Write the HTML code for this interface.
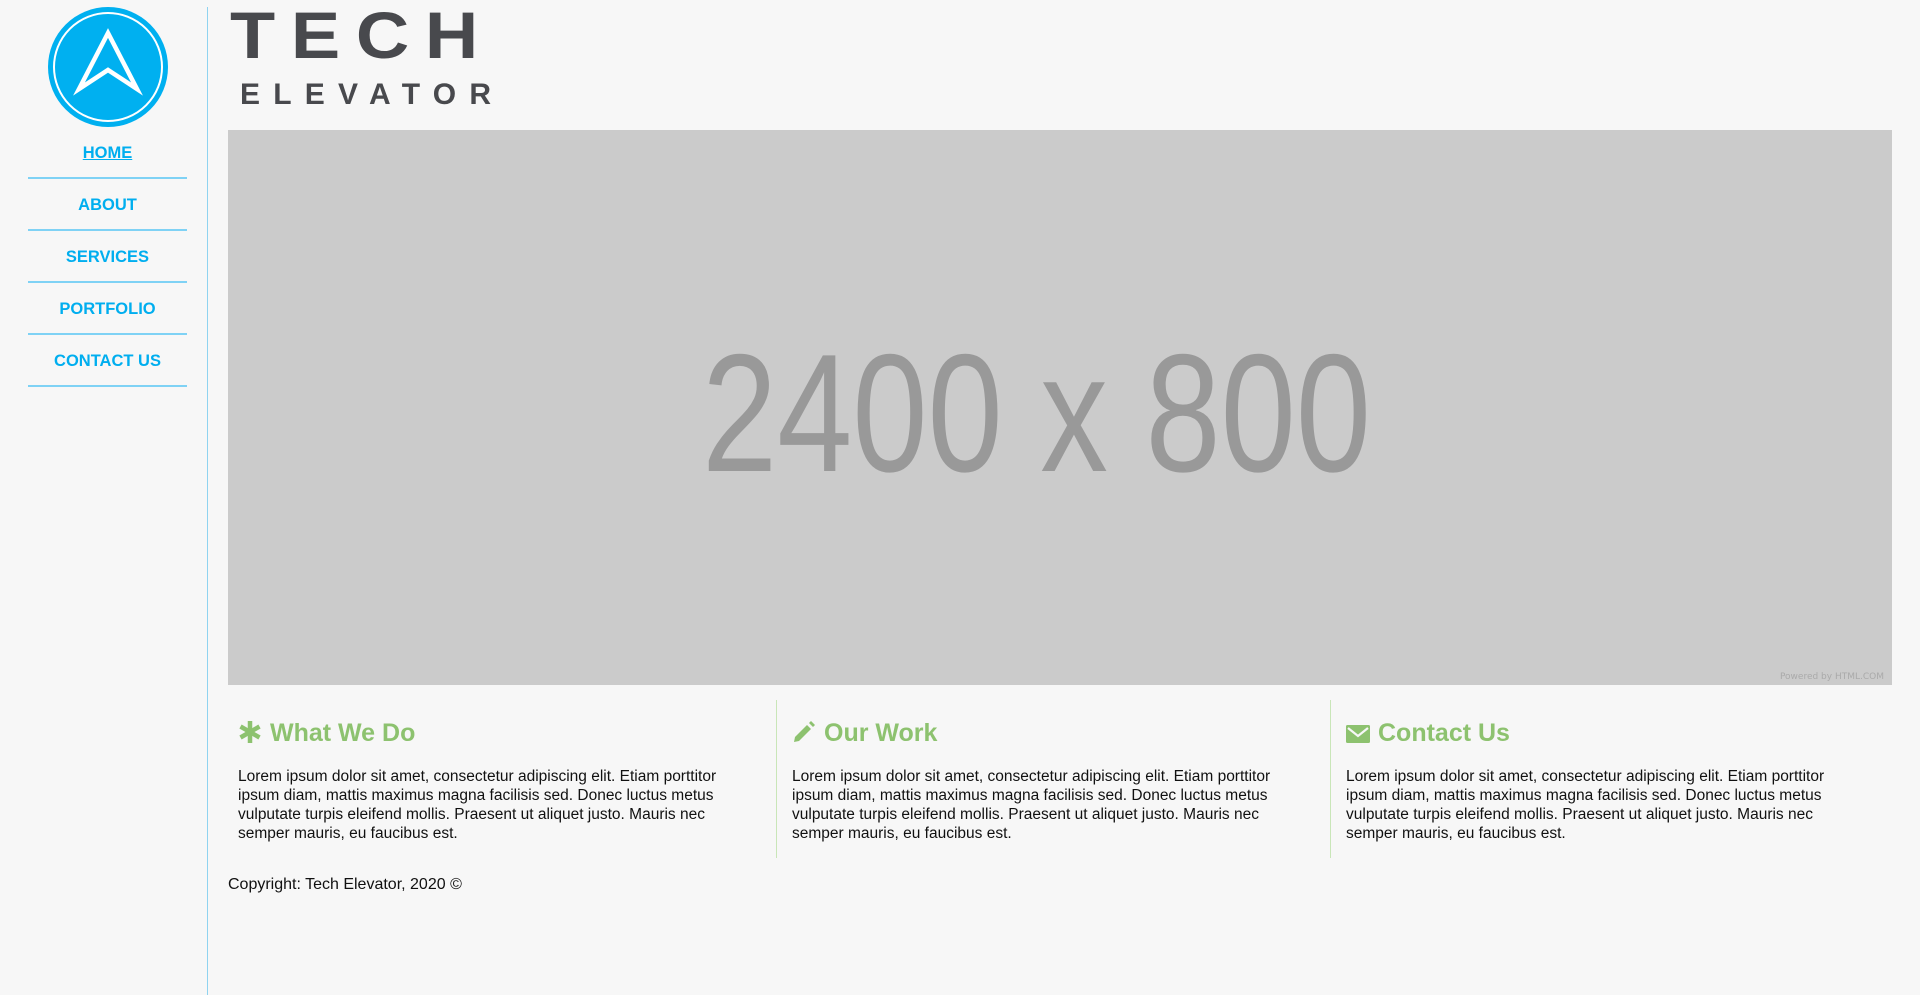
<!DOCTYPE html>
<html><head><meta charset="utf-8">
<style>
html,body{margin:0;padding:0;background:#f7f7f7;width:1920px;height:995px;overflow:hidden;font-family:"Liberation Sans",sans-serif;}
.side{position:absolute;left:0;top:0;width:207px;height:995px;}
.vline{position:absolute;left:207px;top:7px;width:1px;height:988px;background:#8fd3f0;}
.nav{position:absolute;left:28px;width:159px;top:127px;}
.nav a{display:block;height:50px;line-height:52px;border-bottom:2px solid #7fd2f5;text-align:center;color:#00aeef;font-weight:bold;font-size:16.5px;text-decoration:none;font-family:"Liberation Sans",sans-serif;}
.nav a.home{text-decoration:underline;line-height:52px;height:50px}
.hero{position:absolute;left:228px;top:130px;width:1664px;height:555px;background:#cbcbcb;}
.cols{position:absolute;left:228px;top:700px;width:1664px;height:158px;}
.col{position:absolute;top:0;height:158px;width:540px;}
.col h2{margin:0;position:absolute;left:10px;top:19px;color:#8dc26f;font-size:25px;font-weight:bold;font-family:"Liberation Sans",sans-serif;white-space:nowrap}
.col h2 svg{vertical-align:-3px;margin-right:8px}
.col p{margin:0;position:absolute;left:10px;top:67px;width:503px;font-size:15.5px;line-height:19px;color:#111;}
.sep{position:absolute;top:0;width:1px;height:158px;background:#c9e6b8;}
.copy{position:absolute;left:228px;top:876px;font-size:16px;color:#111;}
</style></head><body>
<div class="side">
<svg width="207" height="140" style="position:absolute;left:0;top:0">
<circle cx="108" cy="67" r="60" fill="#00b0f0"/>
<circle cx="108" cy="67" r="54" fill="none" stroke="#fff" stroke-width="2"/>
<path d="M108 33 L79 89 L108 70 L137 89 Z" fill="none" stroke="#fff" stroke-width="4.5" stroke-linejoin="miter"/>
</svg>
<div class="nav">
<a class="home">HOME</a>
<a>ABOUT</a>
<a>SERVICES</a>
<a>PORTFOLIO</a>
<a>CONTACT US</a>
</div>
</div>
<div class="vline"></div>
<svg width="300" height="120" style="position:absolute;left:220px;top:0">
<text x="10" y="58" font-family="Liberation Sans" font-weight="bold" font-size="66" fill="#48494d" textLength="264" lengthAdjust="spacingAndGlyphs" letter-spacing="14">TECH</text>
<text x="20" y="104" font-family="Liberation Sans" font-weight="bold" font-size="30" fill="#48494d" textLength="251" lengthAdjust="spacing">ELEVATOR</text>
</svg>
<div class="hero">
<svg width="1664" height="555">
<text x="474" y="341" font-family="Liberation Sans" font-size="168" fill="#999" textLength="669" lengthAdjust="spacingAndGlyphs">2400 x 800</text>
<text x="1656" y="549" font-family="DejaVu Sans" font-size="9" fill="#aaa" text-anchor="end">Powered by HTML.COM</text>
</svg>
</div>
<div class="cols">
<div class="col" style="left:0">
<h2><svg width="24" height="24" viewBox="0 0 24 24"><g stroke="#8dc26f" stroke-width="4.5"><line x1="12" y1="1" x2="12" y2="23"/><line x1="2.5" y1="6.5" x2="21.5" y2="17.5"/><line x1="2.5" y1="17.5" x2="21.5" y2="6.5"/></g></svg>What We Do</h2>
<p>Lorem ipsum dolor sit amet, consectetur adipiscing elit. Etiam porttitor ipsum diam, mattis maximus magna facilisis sed. Donec luctus metus vulputate turpis eleifend mollis. Praesent ut aliquet justo. Mauris nec semper mauris, eu faucibus est.</p>
</div>
<div class="sep" style="left:548px"></div>
<div class="col" style="left:554px">
<h2><svg width="24" height="24" viewBox="0 0 24 24"><path d="M3 17 L15 5 L19 9 L7 21 L2 22 Z M17 3 L19 1 L23 5 L21 7 Z" fill="#8dc26f"/></svg>Our Work</h2>
<p>Lorem ipsum dolor sit amet, consectetur adipiscing elit. Etiam porttitor ipsum diam, mattis maximus magna facilisis sed. Donec luctus metus vulputate turpis eleifend mollis. Praesent ut aliquet justo. Mauris nec semper mauris, eu faucibus est.</p>
</div>
<div class="sep" style="left:1102px"></div>
<div class="col" style="left:1108px">
<h2><svg width="24" height="20" viewBox="0 0 24 20"><rect x="0" y="1" width="24" height="18" rx="1.5" fill="#8dc26f"/><path d="M2 4 L12 12 L22 4" fill="none" stroke="#f7f7f7" stroke-width="2.2"/></svg>Contact Us</h2>
<p>Lorem ipsum dolor sit amet, consectetur adipiscing elit. Etiam porttitor ipsum diam, mattis maximus magna facilisis sed. Donec luctus metus vulputate turpis eleifend mollis. Praesent ut aliquet justo. Mauris nec semper mauris, eu faucibus est.</p>
</div>
</div>
<div class="copy">Copyright: Tech Elevator, 2020 ©</div>
</body></html>
